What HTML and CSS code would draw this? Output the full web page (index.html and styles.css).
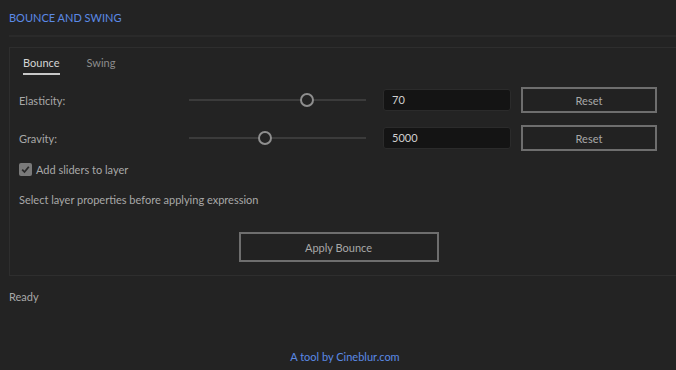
FILE: index.html
```html
<!DOCTYPE html>
<html lang="en">

<head>
  <meta charset="UTF-8">
  <meta name="viewport" content="width=device-width, initial-scale=1.0">
  <title>Bounce and Swing</title>
  <link rel="stylesheet" href="styles.css">
</head>

<body>
  <div id="app">
    <header>
      <h1>BOUNCE AND SWING</h1>
    </header>

    <div id="panel">
      <div id="tabs">
        <div class="tab active">Bounce</div>
        <div class="tab">Swing</div>
      </div>

      <div class="row">
        <label class="rowLabel">Elasticity:</label>
        <div class="slider">
          <div class="track"></div>
          <div class="thumb" style="left: 66.7%;"></div>
        </div>
        <div class="valueBox">70</div>
        <button class="btn resetBtn">Reset</button>
      </div>

      <div class="row">
        <label class="rowLabel">Gravity:</label>
        <div class="slider">
          <div class="track"></div>
          <div class="thumb" style="left: 43%;"></div>
        </div>
        <div class="valueBox">5000</div>
        <button class="btn resetBtn">Reset</button>
      </div>

      <div class="checkRow">
        <span class="checkbox">
          <svg width="9" height="9" viewBox="0 0 9 9">
            <path d="M1.2 4.6 L3.5 7 L7.8 1.8" fill="none" stroke="#2a2a2a" stroke-width="1.8" />
          </svg>
        </span>
        <span>Add sliders to layer</span>
      </div>

      <p class="note">Select layer properties before applying expression</p>

      <div class="applyWrap">
        <button class="btn applyBtn">Apply Bounce</button>
      </div>
    </div>

    <div id="status">Ready</div>

    <footer>A tool by Cineblur.com</footer>
  </div>
</body>

</html>
```

FILE: styles.css
```css
body {
  font-family: 'Lato', sans-serif;
  background-color: #232323;
  color: #a8a8a8;
  margin: 0;
  padding: 0;
  overflow: hidden;
}

#app {
  height: 370px;
  padding-left: 9px;
  display: flex;
  flex-direction: column;
}

header {
  height: 35px;
  border-bottom: 2px solid #2a2a2a;
}

h1 {
  margin: 11px 0 0 0;
  font-size: 11px;
  line-height: 14px;
  font-weight: normal;
  color: #5b8ae6;
}

#panel {
  margin-top: 10px;
  margin-right: -10px;
  border: 1px solid #2e2e2e;
  padding: 8px 0 0 9px;
  height: 219px;
}

#tabs {
  display: flex;
  gap: 27px;
  padding-left: 4px;
  margin-bottom: 12px;
}

.tab {
  font-size: 11px;
  line-height: 14px;
  padding-bottom: 3px;
  color: #8c8c8c;
}

.tab.active {
  color: #d4d4d4;
  border-bottom: 2px solid #c8c8c8;
}

.row {
  display: grid;
  grid-template-columns: 170px 177px 145px 146px;
  align-items: center;
  height: 26px;
  margin-bottom: 12px;
}

.rowLabel {
  font-size: 11px;
}

.slider {
  position: relative;
  height: 14px;
}

.track {
  position: absolute;
  left: 0;
  right: 0;
  top: 6px;
  height: 2px;
  background-color: #3b3b3b;
}

.thumb {
  position: absolute;
  top: 0;
  width: 10px;
  height: 10px;
  margin-left: -7px;
  border: 2px solid #8e8e8e;
  border-radius: 50%;
  background-color: #232323;
}

.valueBox {
  margin-left: 17px;
  height: 22px;
  box-sizing: border-box;
  border: 1px solid #2b2b2b;
  border-radius: 3px;
  background-color: #141414;
  color: #d0d0d0;
  font-size: 11px;
  line-height: 20px;
  padding-left: 8px;
}

.btn {
  font-family: 'Lato', sans-serif;
  font-size: 11px;
  color: #a8a8a8;
  background-color: #222;
  border: 2px solid #6e6e6e;
  cursor: pointer;
}

.resetBtn {
  margin-left: 10px;
  height: 26px;
}

.checkRow {
  display: flex;
  align-items: center;
  gap: 4px;
  font-size: 11px;
}

.checkbox {
  width: 13px;
  height: 13px;
  border-radius: 2px;
  background-color: #7a7a7a;
  display: flex;
  align-items: center;
  justify-content: center;
}

.note {
  font-size: 11px;
  margin: 17px 0 0 0;
}

.applyWrap {
  display: flex;
  justify-content: center;
  margin-top: 26px;
  padding-right: 27px;
}

.applyBtn {
  width: 200px;
  height: 30px;
}

#status {
  font-size: 11px;
  margin-top: 14px;
}

footer {
  margin-top: auto;
  margin-bottom: 7px;
  text-align: center;
  font-size: 11px;
  color: #5b8ae6;
  padding-left: 5px;
}
```
